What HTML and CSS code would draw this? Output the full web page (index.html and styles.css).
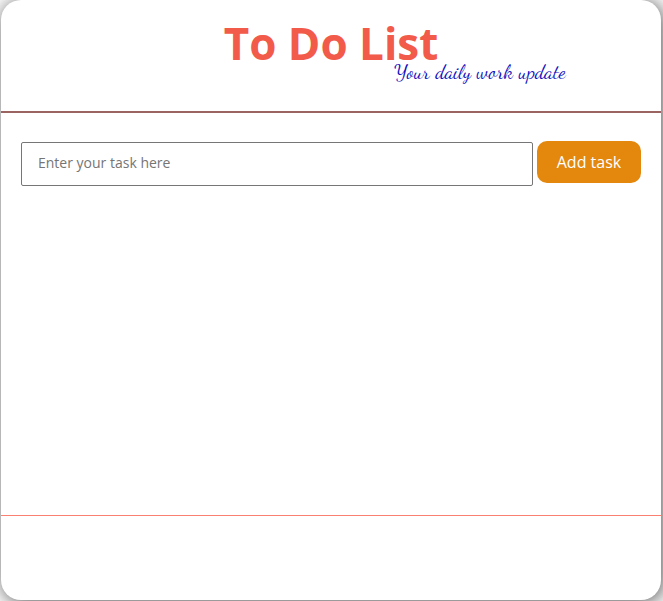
FILE: index.html
```html
<!DOCTYPE html>
<html lang="en">
<head>
<meta charset="utf-8">
<title>To Do List</title>
<link rel="stylesheet" href="styles.css">
</head>
<body>
<main class="card">
  <header class="header">
    <h1 class="title">To Do List</h1>
    <p class="tagline">Your daily work update</p>
  </header>
  <section class="tasks">
    <form class="task-form">
      <input class="task-input" type="text" placeholder="Enter your task here">
      <button class="add-button" type="button">Add task</button>
    </form>
  </section>
  <footer class="footer"></footer>
</main>
</body>
</html>
```
FILE: styles.css
```css
* { box-sizing: border-box; }
body {
  margin: 0;
  height: 601px;
  padding: 0 2px 1px 1px;
  overflow: hidden;
  background: #fff;
  font-family: "Open Sans", sans-serif;
}
.card {
  display: flex;
  flex-direction: column;
  height: 600px;
  border-radius: 20px;
  background: #fff;
  box-shadow: 2px 2px 20px rgba(0, 0, 0, 0.7);
}
.header {
  height: 113px;
  padding-top: 13px;
  border-bottom: 2px solid #9c6460;
}
.title {
  margin: 0;
  text-align: center;
  font-size: 44px;
  line-height: 61px;
  color: #f25a49;
}
.tagline {
  margin: -15px 0 0 393px;
  font-family: "Dancing Script", "Liberation Serif", cursive;
  font-size: 20px;
  line-height: 26px;
  word-spacing: 0.4px;
  white-space: nowrap;
  color: #0f0fbe;
}
.tasks { flex: 1; padding: 28px 20px 0; }
.task-form { display: flex; gap: 4px; align-items: flex-start; }
.task-input {
  width: 512px;
  height: 44px;
  margin-top: 1px;
  padding: 0 16px 3px;
  border: 1px solid #767676;
  border-radius: 2px;
  font: 14px "Open Sans", sans-serif;
}
.task-input::placeholder { color: #757575; }
.add-button {
  width: 104px;
  height: 42px;
  padding: 0;
  border: 0;
  border-radius: 10px;
  background: #e3870d;
  color: #fff;
  font: 16px "Open Sans", sans-serif;
}
.footer { height: 85px; border-top: 1px solid #fa8072; }
```
